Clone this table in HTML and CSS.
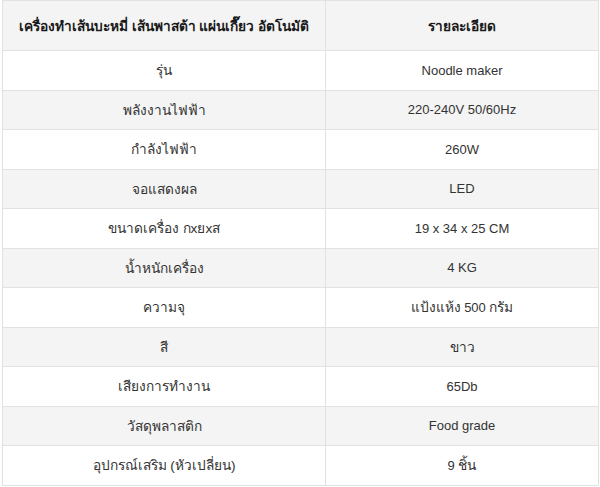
FILE: index.html
```html
<!DOCTYPE html>
<html lang="th">
<head>
<meta charset="utf-8">
<link rel="stylesheet" href="styles.css">
</head>
<body>
<table class="spec">
  <thead>
    <tr><th class="c1 th">เครื่องทำเส้นบะหมี่ เส้นพาสต้า แผ่นเกี๊ยว อัตโนมัติ</th><th class="c2 th">รายละเอียด</th></tr>
  </thead>
  <tbody>
    <tr><td class="th">รุ่น</td><td>Noodle maker</td></tr>
    <tr><td class="th">พลังงานไฟฟ้า</td><td>220-240V 50/60Hz</td></tr>
    <tr><td class="th">กำลังไฟฟ้า</td><td>260W</td></tr>
    <tr><td class="th">จอแสดงผล</td><td>LED</td></tr>
    <tr><td class="th">ขนาดเครื่อง กxยxส</td><td>19 x 34 x 25 CM</td></tr>
    <tr><td class="th">น้ำหนักเครื่อง</td><td>4 KG</td></tr>
    <tr><td class="th">ความจุ</td><td><span class="th">แป้งแห้ง</span> 500 <span class="th">กรัม</span></td></tr>
    <tr><td class="th">สี</td><td class="th">ขาว</td></tr>
    <tr><td class="th">เสียงการทำงาน</td><td>65Db</td></tr>
    <tr><td class="th">วัสดุพลาสติก</td><td>Food grade</td></tr>
    <tr><td class="th">อุปกรณ์เสริม (หัวเปลี่ยน)</td><td>9 <span class="th">ชิ้น</span></td></tr>
  </tbody>
</table>
</body>
</html>
```
FILE: styles.css
```css
html, body {
  margin: 0;
  padding: 0;
  background: #ffffff;
}
.spec {
  margin-left: 2px;
  width: 597px;
  border-collapse: collapse;
  table-layout: fixed;
  font-family: "Liberation Sans", Arial, sans-serif;
  font-size: 13px;
  color: #333333;
}
.spec th, .spec td {
  border: 1px solid #e2e2e2;
  text-align: center;
  vertical-align: middle;
  padding: 0 8px;
}
.spec th {
  height: 49px;
  background: #f4f4f4;
  font-weight: bold;
  color: #1a1a1a;
}
.spec .c1 { width: 306px; }
.spec td { height: 38.5px; }
.spec tbody tr:nth-child(even) { background: #f4f4f4; }
.spec .th { font-size: 13.7px; }
```
